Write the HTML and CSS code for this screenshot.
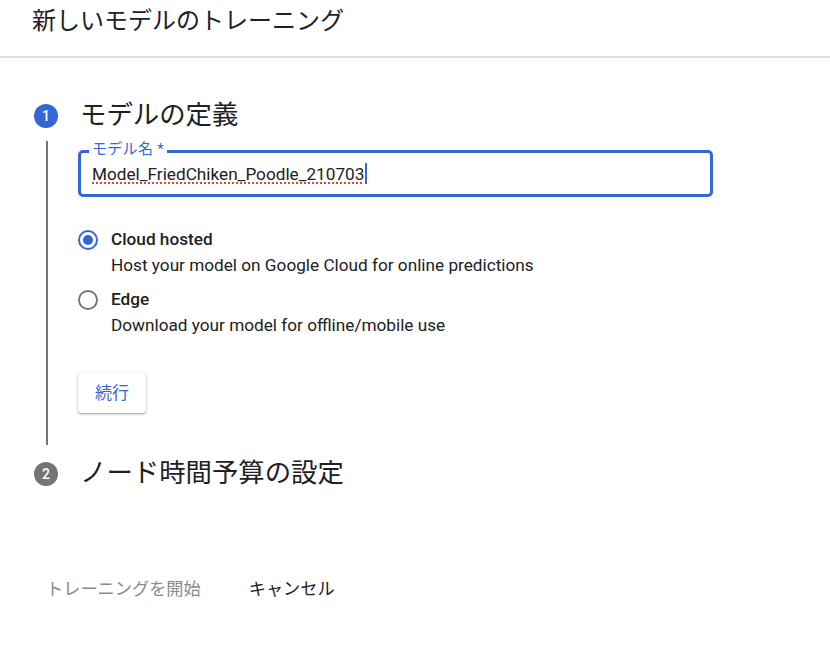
FILE: index.html
```html
<!DOCTYPE html>
<html lang="ja">
<head>
<meta charset="utf-8">
<link rel="stylesheet" href="styles.css">
</head>
<body>
<header class="header">
  <h1 class="title">新しいモデルのトレーニング</h1>
</header>
<main class="stepper">
  <div class="step-head step-head-1">
    <span class="step-num active">1</span>
    <h2 class="step-title">モデルの定義</h2>
  </div>
  <div class="step-body">
    <div class="field">
      <span class="field-label">モデル名&nbsp;*</span>
      <span class="field-value">Model_FriedChiken_Poodle_210703</span><span class="caret"></span>
    </div>
    <div class="radios">
      <div class="radio-opt">
        <span class="radio checked"><span class="dot"></span></span>
        <div class="radio-text">
          <div class="radio-title">Cloud hosted</div>
          <div class="radio-desc">Host your model on Google Cloud for online predictions</div>
        </div>
      </div>
      <div class="radio-opt">
        <span class="radio"></span>
        <div class="radio-text">
          <div class="radio-title">Edge</div>
          <div class="radio-desc">Download your model for offline/mobile use</div>
        </div>
      </div>
    </div>
    <button class="continue">続行</button>
  </div>
  <div class="step-head step-head-2">
    <span class="step-num inactive">2</span>
    <h2 class="step-title">ノード時間予算の設定</h2>
  </div>
</main>
<footer class="footer">
  <span class="btn-start">トレーニングを開始</span>
  <span class="btn-cancel">キャンセル</span>
</footer>
</body>
</html>
```
FILE: styles.css
```css
* { box-sizing: border-box; }
html, body {
  margin: 0;
  padding: 0;
  background: #fff;
}
body {
  width: 830px;
  height: 672px;
  overflow: hidden;
  font-family: Roboto, "Noto Sans CJK JP", sans-serif;
  color: #202124;
}
.header {
  height: 58px;
  border-bottom: 2px solid #e0e0e0;
  padding: 5px 0 0 32px;
}
.title {
  margin: 0;
  font-size: 24px;
  line-height: 32px;
  font-weight: 400;
  color: #202124;
}
.step-head {
  display: flex;
  align-items: center;
  height: 32px;
  padding-left: 34px;
}
.step-head-1 { margin-top: 41px; }
.step-head-2 { margin-top: 12px; }
.step-num {
  width: 24px;
  height: 24px;
  border-radius: 50%;
  color: #fff;
  font-size: 14px;
  font-weight: 500;
  display: flex;
  align-items: center;
  justify-content: center;
  flex: none;
}
.step-num.active { background: #3367d6; margin-top: 2px; }
.step-num.inactive { background: #757575; margin-top: 2px; }
.step-title {
  margin: 0 0 0 22px;
  font-size: 26.4px;
  line-height: 32px;
  font-weight: 400;
  color: #202124;
}
.step-body {
  margin: 10px 0 0 46px;
  border-left: 2px solid #757575;
  padding: 9px 0 32px 30px;
}
.field {
  position: relative;
  width: 635px;
  height: 47px;
  border: 3px solid #3367d6;
  border-radius: 5px;
  padding-left: 11px;
  display: flex;
  align-items: center;
}
.field-label {
  position: absolute;
  top: -12px;
  left: 8px;
  padding: 0 3px;
  background: #fff;
  color: #3367d6;
  font-size: 15px;
  line-height: 17px;
  letter-spacing: 0.3px;
}
.field-value {
  font-size: 17.2px;
  line-height: 22px;
  color: #202124;
  text-decoration: underline dotted #ea4335;
  text-decoration-thickness: 2px;
  text-underline-offset: 3px;
}
.caret {
  width: 2px;
  height: 21px;
  background: #3367d6;
  margin-left: 1px;
}
.radios {
  margin-top: 30px;
  display: flex;
  flex-direction: column;
  gap: 8px;
}
.radio-opt {
  display: flex;
  align-items: flex-start;
}
.radio {
  width: 20px;
  height: 20px;
  margin-top: 3px;
  border: 2px solid #757575;
  border-radius: 50%;
  display: flex;
  align-items: center;
  justify-content: center;
  flex: none;
}
.radio.checked { border-color: #3367d6; }
.dot {
  width: 10px;
  height: 10px;
  border-radius: 50%;
  background: #3367d6;
}
.radio-text { margin-left: 13px; }
.radio-title {
  font-size: 17.2px;
  line-height: 24px;
  font-weight: 500;
  color: #202124;
}
.radio-desc {
  font-size: 17.2px;
  line-height: 28px;
  color: #202124;
}
.continue {
  display: block;
  margin-top: 34px;
  width: 68px;
  height: 40px;
  border: none;
  border-radius: 4px;
  background: #fff;
  color: #3367d6;
  font-family: Roboto, "Noto Sans CJK JP", sans-serif;
  font-size: 17px;
  box-shadow: 0 1px 3px rgba(0,0,0,0.3), 0 1px 1px rgba(0,0,0,0.12);
  padding: 0 0 3px 0;
}
.footer {
  margin-top: 88px;
  padding-left: 46px;
  display: flex;
  align-items: center;
  font-size: 17.2px;
  line-height: 24px;
}
.btn-start { color: #8a8a8a; }
.btn-cancel { margin-left: 48px; color: #202124; }
```
